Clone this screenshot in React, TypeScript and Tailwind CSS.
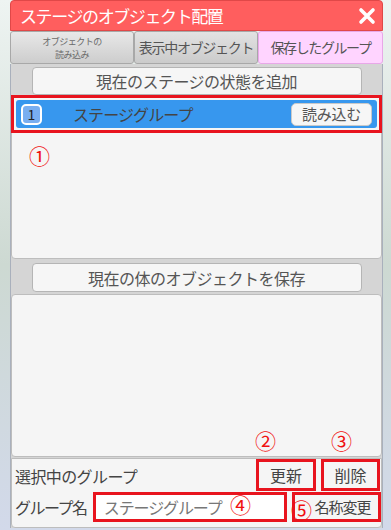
import React from 'react';

function Circled({ n, className }: { n: string; className: string }) {
  return (
    <span className={`absolute text-[21px] leading-none tracking-normal text-[#f01010] ${className}`}>{n}</span>
  );
}

export default function App() {
  return (
    <div className="relative w-[391px] h-[530px] overflow-hidden whitespace-nowrap font-['Noto_Sans_CJK_JP','Noto_Sans',sans-serif] bg-gradient-to-b from-[#eef4f2] via-[#cdd9d2] to-[#d2d9ea]">
      <div className="ml-[10px] w-[373px]">
        {/* title */}
        <div className="h-[31px] bg-[#ff5e5e] rounded-t-[4px] border border-[#e04848] flex items-center justify-between pl-[9px] pr-[6px]">
          <span className="text-white text-[17px] tracking-[-1.4px] leading-none">ステージのオブジェクト配置</span>
          <svg width="18" height="18" viewBox="0 0 18 18">
            <path d="M3 3 L15 15 M15 3 L3 15" stroke="white" strokeWidth="3.6" strokeLinecap="round" />
          </svg>
        </div>

        {/* tabs */}
        <div className="flex h-[33px]">
          <div className="w-[124px] flex flex-col items-center justify-center bg-gradient-to-b from-[#e8e8e8] to-[#cdcdcd] border border-[#a8a8a8] rounded-[3px] text-[9px] leading-[13px] tracking-[-0.5px] text-[#6a6a6a]">
            <span>オブジェクトの</span>
            <span>読み込み</span>
          </div>
          <div className="w-[124px] flex items-center justify-center bg-gradient-to-b from-[#e2e2e2] to-[#cbcbcb] border border-[#a8a8a8] rounded-[3px] text-[14px] tracking-[-1.3px] text-[#555]">
            表示中オブジェクト
          </div>
          <div className="w-[125px] flex items-center justify-center bg-[#ffd4ff] border border-[#e8a8e8] rounded-[3px] text-[14px] tracking-[-1.4px] text-[#555]">
            保存したグループ
          </div>
        </div>

        {/* content */}
        <div className="relative bg-[#d5d5d5] border-l border-r border-[#a9b0bc] h-[464px] flex flex-col">
          <div className="flex justify-center pt-[3px]">
            <div className="w-[330px] h-[28px] bg-[#f6f6f6] border border-[#b5b5b5] rounded-[4px] flex items-center justify-center text-[16px] tracking-[-0.5px] text-[#555]">
              現在のステージの状態を追加
            </div>
          </div>

          <div className="mt-[1px] h-[163px] bg-[#f5f5f5] border border-[#bdbdbd] rounded-[4px] flex flex-col">
            <div className="-mt-[2px] -mx-[1px] border-[3px] border-[#e8141e] p-[2px]">
              <div className="h-[28px] bg-[#3797ee] rounded-[3px] flex items-center pl-[5px] pr-[5px]">
                <div className="w-[21px] h-[21px] rounded-[5px] border-[2px] border-white bg-[#79aef0] flex items-center justify-center text-[14px] text-[#222]">
                  1
                </div>
                <span className="ml-[31px] text-[16px] tracking-[-0.9px] text-[#444]">ステージグループ</span>
                <div className="ml-auto w-[81px] h-[23px] bg-[#f6f6f6] border border-[#c9c9c9] rounded-[5px] flex items-center justify-center text-[15px] tracking-[-0.2px] text-[#555]">
                  読み込む
                </div>
              </div>
            </div>
            <span className="ml-[17px] mt-[12px] text-[21px] leading-none text-[#f01010]">①</span>
          </div>

          <div className="flex justify-center pt-[4px]">
            <div className="w-[330px] h-[29px] bg-[#f6f6f6] border border-[#b5b5b5] rounded-[4px] flex items-center justify-center text-[16px] tracking-[-0.5px] text-[#555]">
              現在の体のオブジェクトを保存
            </div>
          </div>

          <div className="mt-[2px] h-[163px] bg-[#f5f5f5] border border-[#bdbdbd] rounded-[4px]" />

          <div className="mt-[1px] flex-1 bg-[#f5f5f5] border border-[#bdbdbd] rounded-b-[4px] flex flex-col">
            <div className="h-[33px] flex items-center">
              <span className="ml-[3px] text-[16px] tracking-[-0.6px] text-[#444]">選択中のグループ</span>
              <div className="ml-auto w-[60px] h-[32px] -mt-[1px] border-[3px] border-[#e8141e] flex items-center justify-center text-[16px] text-[#444]">
                更新
              </div>
              <div className="ml-[5px] mr-[1px] w-[59px] h-[32px] -mt-[1px] border-[3px] border-[#e8141e] flex items-center justify-center text-[16px] text-[#444]">
                削除
              </div>
            </div>
            <div className="h-[30px] flex items-center">
              <span className="ml-[3px] w-[78px] text-[16px] tracking-[-1.5px] text-[#444]">グループ名</span>
              <div className="w-[195px] h-[30px] border-[3px] border-[#e8141e] bg-white flex items-center pl-[8px] text-[16px] tracking-[-1.1px] text-[#777]">
                ステージグループ
              </div>
              <div className="ml-[5px] w-[89px] h-[30px] border-[3px] border-[#e8141e] flex items-center justify-center pl-[12px] text-[15px] tracking-[-1px] text-[#444]">
                名称変更
              </div>
            </div>
          </div>

          <Circled n="②" className="left-[244px] top-[366px]" />
          <Circled n="③" className="left-[320px] top-[366px]" />
          <Circled n="④" className="left-[219px] top-[430px]" />
          <Circled n="⑤" className="left-[280px] top-[435px]" />
        </div>
      </div>
    </div>
  );
}
